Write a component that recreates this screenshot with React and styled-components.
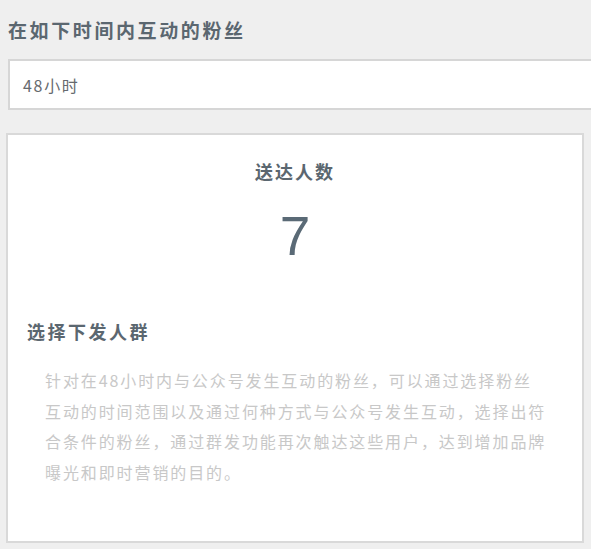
import React from "react";
import styled, { createGlobalStyle } from "styled-components";

const Global = createGlobalStyle`
  html, body {
    margin: 0;
    padding: 0;
    background: #efefef;
  }
  body {
    font-family: "Noto Sans CJK SC", "Noto Sans", sans-serif;
  }
`;

const Page = styled.div`
  width: 591px;
  height: 549px;
  overflow: hidden;
  background: #efefef;
  display: flex;
  flex-direction: column;
`;

const SectionTitle = styled.div`
  margin: 18px 0 0 8px;
  font-size: 19px;
  line-height: 24px;
  font-weight: 700;
  letter-spacing: 2.6px;
  color: #5b6770;
`;

const Select = styled.div`
  margin: 17px 0 0 8px;
  width: 620px;
  height: 47px;
  flex-shrink: 0;
  box-sizing: content-box;
  border: 2px solid #d6d6d6;
  background: #ffffff;
  display: flex;
  align-items: center;
  padding-left: 13px;
  font-size: 16px;
  letter-spacing: 1.7px;
  color: #666a6e;
`;

const Card = styled.div`
  margin: 23px 6px 0 6px;
  width: 555px;
  height: 382px;
  flex-shrink: 0;
  border: 2px solid #d9d9d9;
  background: #ffffff;
  padding: 24px 0 0 19px;
  box-sizing: content-box;
  display: flex;
  flex-direction: column;
`;

const StatLabel = styled.div`
  margin-left: -19px;
  text-align: center;
  font-size: 18px;
  line-height: 24px;
  font-weight: 700;
  letter-spacing: 2px;
  color: #5b6770;
`;

const StatValue = styled.div`
  margin: 21px 0 0 -19px;
  text-align: center;
  font-family: "Liberation Sans", Arial, sans-serif;
  font-size: 55px;
  line-height: 64px;
  font-weight: 400;
  color: #5a6a76;
`;

const SubTitle = styled.div`
  margin-top: 51px;
  font-size: 18px;
  line-height: 24px;
  font-weight: 700;
  letter-spacing: 2.5px;
  color: #5b6770;
`;

const Desc = styled.div`
  margin: 22px 0 0 18px;
  font-size: 16px;
  line-height: 30.5px;
  letter-spacing: 1.9px;
  color: #c8c8c8;
  display: flex;
  flex-direction: column;
`;

const DescLine = styled.span`
  display: block;
  white-space: nowrap;
`;

const lines = [
  "针对在48小时内与公众号发生互动的粉丝，可以通过选择粉丝",
  "互动的时间范围以及通过何种方式与公众号发生互动，选择出符",
  "合条件的粉丝，通过群发功能再次触达这些用户，达到增加品牌",
  "曝光和即时营销的目的。",
];

export default function App() {
  return (
    <>
      <Global />
      <Page>
        <SectionTitle>在如下时间内互动的粉丝</SectionTitle>
        <Select>48小时</Select>
        <Card>
          <StatLabel>送达人数</StatLabel>
          <StatValue>7</StatValue>
          <SubTitle>选择下发人群</SubTitle>
          <Desc>
            {lines.map((l) => (
              <DescLine key={l}>{l}</DescLine>
            ))}
          </Desc>
        </Card>
      </Page>
    </>
  );
}
